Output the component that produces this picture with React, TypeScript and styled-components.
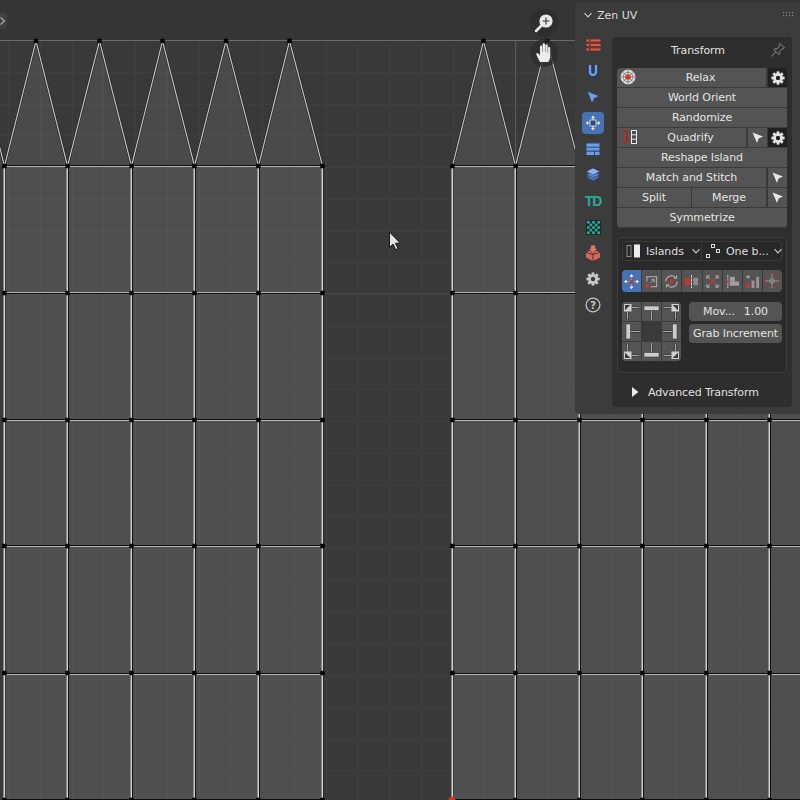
import React from "react";
import styled, { createGlobalStyle } from "styled-components";

const Global = createGlobalStyle`
  html, body { margin: 0; padding: 0; background: #393939; }
  #root { width: 800px; height: 800px; }
`;

const Stage = styled.div`
  position: relative;
  width: 800px;
  height: 800px;
  overflow: hidden;
  background: #393939;
  font-family: "DejaVu Sans", sans-serif;
  font-size: 11px;
  letter-spacing: -0.1px;
  color: #e2e2e2;
`;

const Canvas = styled.svg`
  position: absolute;
  left: 0;
  top: 0;
`;

const RoundTool = styled.div<{ $top: number }>`
  position: absolute;
  left: 530px;
  top: ${(p) => p.$top}px;
  width: 28px;
  height: 28px;
  border-radius: 50%;
  background: rgba(44, 44, 44, 0.75);
  display: flex;
  align-items: center;
  justify-content: center;
`;

const SideTab = styled.div`
  position: absolute;
  left: -8px;
  top: 13px;
  width: 15px;
  height: 16px;
  border-radius: 3px;
  background: #3f3f3f;
  display: flex;
  justify-content: flex-end;
  align-items: center;
  padding-right: 1px;
  box-sizing: border-box;
`;

const Panel = styled.aside`
  position: absolute;
  left: 575px;
  top: 3px;
  width: 225px;
  height: 411px;
  background: #3c3c3c;
  border-radius: 4px 0 0 4px;
  display: flex;
  flex-direction: column;
`;

const PanelHead = styled.header`
  height: 24px;
  display: flex;
  align-items: center;
  padding: 0 4px 0 8px;
  gap: 4px;
  color: #dcdcdc;
`;

const PanelTitle = styled.span`
  flex: 1;
  font-size: 11px;
  letter-spacing: 0;
`;

const PanelBody = styled.div`
  flex: 1;
  display: flex;
  padding: 10px 8px 7px 7px;
`;

const Tabs = styled.nav`
  width: 22px;
  margin: -3px 8px 0 0;
  display: flex;
  flex-direction: column;
  align-items: center;
  gap: 4px;
`;

const Tab = styled.div<{ $active?: boolean }>`
  width: 22px;
  height: 22px;
  border-radius: 4px;
  background: ${(p) => (p.$active ? "#4772b3" : "transparent")};
  display: flex;
  align-items: center;
  justify-content: center;
`;

const TdMark = styled.span`
  font-family: "Liberation Sans", sans-serif;
  font-weight: 700;
  font-size: 14px;
  letter-spacing: -1px;
  color: #2fa898;
`;

const SubPanel = styled.section`
  width: 180px;
  height: 370px;
  background: #2e2e2e;
  border-radius: 4px;
  box-sizing: border-box;
  padding: 0 5px 0 5px;
  display: flex;
  flex-direction: column;
`;

const SubHead = styled.div`
  height: 31px;
  box-sizing: border-box;
  padding: 0 8px 4px 0;
  display: flex;
  align-items: center;
  justify-content: center;
  position: relative;
  color: #e0e0e0;
`;

const PinSlot = styled.span`
  position: absolute;
  right: 1px;
  top: 5px;
  display: flex;
`;

const ButtonStack = styled.div`
  display: flex;
  flex-direction: column;
  width: 170px;
  height: 160px;
  border-radius: 4px;
  overflow: hidden;
`;

const ButtonRow = styled.div`
  display: flex;
  height: 20px;
`;

const OpButton = styled.button<{ $pad?: number }>`
  flex: 1 1 0;
  min-width: 0;
  height: 20px;
  margin: 0;
  padding: 0 0 0 ${(p) => p.$pad ?? 0}px;
  background: #545454;
  border: 0;
  border-right: 1px solid #3a3a3a;
  border-bottom: 1px solid #3a3a3a;
  color: #e4e4e4;
  font: 11px "DejaVu Sans", sans-serif;
  letter-spacing: -0.1px;
  position: relative;
  display: flex;
  align-items: center;
  justify-content: center;
  white-space: nowrap;
  &:last-child { border-right: 0; }
`;

const LeadIcon = styled.span`
  position: absolute;
  left: 3px;
  top: 1px;
  display: flex;
`;

const SquareButton = styled.button<{ $dark?: boolean }>`
  flex: 0 0 20px;
  width: 20px;
  height: 20px;
  margin: 0;
  padding: 0;
  background: ${(p) => (p.$dark ? "#212121" : "#545454")};
  border: 0;
  border-left: 1px solid #3a3a3a;
  border-bottom: 1px solid #3a3a3a;
  display: flex;
  align-items: center;
  justify-content: center;
  box-sizing: border-box;
`;

const OptionsBox = styled.div`
  margin-top: 9px;
  width: 170px;
  height: 136px;
  box-sizing: border-box;
  border: 1px solid #3d3d3d;
  border-radius: 4px;
  background: #2a2a2a;
  padding: 3px 0 0 4px;
  display: flex;
  flex-direction: column;
`;

const SelectRow = styled.div`
  display: flex;
  height: 20px;
  width: 160px;
  box-shadow: inset 0 0 0 1px #3a3a3a;
  border-radius: 4px;
  background: #282828;
`;

const SelectCell = styled.div`
  width: 80px;
  display: flex;
  align-items: center;
  padding-left: 4px;
  gap: 4px;
  box-sizing: border-box;
  color: #dedede;
  white-space: nowrap;
  &:first-child { border-right: 1px solid #3a3a3a; }
`;

const SelectLabel = styled.span`
  flex: 1;
`;

const IconRow = styled.div`
  margin-top: 9px;
  display: flex;
  width: 160px;
  height: 22px;
  border-radius: 4px;
  overflow: hidden;
`;

const ModeButton = styled.div<{ $active?: boolean }>`
  flex: 1;
  background: ${(p) => (p.$active ? "#4772b3" : "#545454")};
  border-right: 1px solid #3a3a3a;
  display: flex;
  align-items: center;
  justify-content: center;
  &:last-child { border-right: 0; }
`;

const PivotArea = styled.div`
  margin-top: 10px;
  display: flex;
  gap: 8px;
`;

const PivotGrid = styled.div`
  width: 59px;
  height: 59px;
  display: grid;
  grid-template-columns: repeat(3, 1fr);
  grid-template-rows: repeat(3, 1fr);
  gap: 1px;
  background: #3a3a3a;
  border-radius: 4px;
  overflow: hidden;
`;

const PivotCell = styled.div<{ $center?: boolean }>`
  background: ${(p) => (p.$center ? "#3a3a3a" : "#545454")};
  display: flex;
  align-items: center;
  justify-content: center;
`;

const FieldColumn = styled.div`
  width: 93px;
  display: flex;
  flex-direction: column;
  gap: 3px;
`;

const Field = styled.div`
  height: 19px;
  background: #545454;
  border-radius: 4px;
  color: #e2e2e2;
  display: flex;
  align-items: center;
  justify-content: center;
  gap: 9px;
  white-space: nowrap;
`;

const Advanced = styled.div`
  margin-top: 9px;
  height: 20px;
  display: flex;
  align-items: center;
  padding-left: 14px;
  gap: 9px;
  color: #e0e0e0;
`;

/* ---------- canvas ---------- */
const XS = [4, 67, 131, 194, 258, 322];
const XR = [452, 515, 579, 642, 706, 769];
const YS = [
  { y: 166, dark: 165, light: 166 },
  { y: 293, dark: 293, light: 292 },
  { y: 420, dark: 419, light: 420 },
  { y: 546, dark: 545, light: 546 },
  { y: 673, dark: 673, light: 674 },
  { y: 800, dark: 799, light: 800 },
];
const APEX_L = [-27.5, 36, 99.5, 162.5, 226, 289.5];
const APEX_R = [483.5, 547, 610];
const XL_ALL = [-59, ...XS];

function Mesh() {
  const grid: number[] = [];
  for (let i = 0; i < 26; i++) grid.push(8.5 + Math.round(i * 31.75));
  const gridY: number[] = [];
  for (let i = 1; i < 25; i++) gridY.push(40.5 + Math.round(i * 31.75));
  const triPts = (xs: number[], ap: number[]) =>
    ap.map((a, i) => `${xs[i] + 0.5},166 ${a},41 ${xs[i + 1] + 0.5},166`);
  const tris = [...triPts(XL_ALL, APEX_L), ...triPts(XR, APEX_R)];
  const verts: [number, number][] = [];
  [...XS, ...XR].forEach((x) => YS.forEach((r) => verts.push([x + 0.5, r.y])));
  [...APEX_L, ...APEX_R].forEach((x) => verts.push([x, 41]));
  return (
    <Canvas width={800} height={800} viewBox="0 0 800 800">
      <rect x={0} y={41} width={800} height={759} fill="#393939" />
      <rect x={0} y={0} width={800} height={41} fill="#353535" />
      {grid.map((x) => (
        <line key={x} x1={x} x2={x} y1={41} y2={800} stroke="#3f3f3f" strokeWidth={1} />
      ))}
      {gridY.map((y) => (
        <line key={y} x1={0} x2={800} y1={y} y2={y} stroke="#3f3f3f" strokeWidth={1} />
      ))}
      <line x1={0} x2={800} y1={40.5} y2={40.5} stroke="#6c6c6c" strokeWidth={1} />
      <line x1={515.5} x2={515.5} y1={41} y2={166} stroke="#575757" />
      <line x1={0} x2={800} y1={293.5} y2={293.5} stroke="#4a4a4a" />
      {tris.map((p) => (
        <polygon key={p} points={p} fill="#ffffff" fillOpacity={0.085} />
      ))}
      <rect x={4} y={166} width={318} height={634} fill="#4f4f4f" />
      <rect x={452} y={166} width={348} height={634} fill="#4f4f4f" />
      {grid.map((x) =>
        (x > 4 && x < 322) || x > 452 ? (
          <line key={x} x1={x} x2={x} y1={166} y2={800} stroke="#545454" strokeWidth={1} />
        ) : null
      )}
      {gridY.map((y) =>
        y > 166 ? (
          <React.Fragment key={y}>
            <line x1={4} x2={322} y1={y} y2={y} stroke="#545454" />
            <line x1={452} x2={800} y1={y} y2={y} stroke="#545454" />
          </React.Fragment>
        ) : null
      )}
      {tris.map((p) => (
        <polyline key={p} points={p} fill="none" stroke="#1d1d1d" strokeOpacity={0.65} strokeWidth={2.6} />
      ))}
      {tris.map((p) => (
        <polyline key={p} points={p} fill="none" stroke="#c8c8c8" strokeWidth={1.05} />
      ))}
      {[...XS, ...XR].map((x) => {
        const edge = x === 4 || x === 322 || x === 452;
        return (
          <React.Fragment key={x}>
            <line x1={x + 1.5} x2={x + 1.5} y1={166} y2={800} stroke="#0c0c0c" strokeOpacity={edge ? 0.25 : 0.9} />
            <line x1={x - 0.5} x2={x - 0.5} y1={166} y2={800} stroke="#8a8a8a" />
            <line x1={x + 0.5} x2={x + 0.5} y1={166} y2={800} stroke="#cecece" />
          </React.Fragment>
        );
      })}
      {YS.map((r) => (
        <React.Fragment key={r.y}>
          <line x1={4} x2={322} y1={r.light + 0.5} y2={r.light + 0.5} stroke="#b4b4b4" />
          <line x1={452} x2={800} y1={r.light + 0.5} y2={r.light + 0.5} stroke="#b4b4b4" />
          <line x1={4} x2={322} y1={r.dark + 0.5} y2={r.dark + 0.5} stroke="#0e0e0e" />
          <line x1={452} x2={800} y1={r.dark + 0.5} y2={r.dark + 0.5} stroke="#0e0e0e" />
        </React.Fragment>
      ))}
      {verts.map(([x, y]) => (
        <rect key={`${x}-${y}`} x={x - 2.25} y={y - 2.25} width={4.5} height={4.5} rx={1} fill="#000" />
      ))}
      <circle cx={452} cy={800} r={3.5} fill="#c8382e" />
      <path
        d="M389.5 232 v15.5 l3.6-3.4 2.6 5.6 2.4-1.1 -2.7-5.4 h5z"
        fill="#e4e4e4"
        stroke="#0a0a0a"
        strokeWidth={0.9}
      />
    </Canvas>
  );
}

/* ---------- icons ---------- */
const Svg = styled.svg`
  display: block;
  flex: none;
`;

const Chevron = () => (
  <Svg width={10} height={10} viewBox="0 0 10 10">
    <path d="M1.5 3.2 5 6.8 8.5 3.2" fill="none" stroke="#c8c8c8" strokeWidth={1.2} />
  </Svg>
);

const Gear = ({ c = "#e8e8e8", hole = "#212121" }: { c?: string; hole?: string }) => (
  <Svg width={14} height={14} viewBox="0 0 14 14">
    {[0, 45, 90, 135].map((a) => (
      <rect key={a} x={5.6} y={0.4} width={2.8} height={13.2} fill={c} transform={`rotate(${a} 7 7)`} />
    ))}
    <circle cx={7} cy={7} r={4.8} fill={c} />
    <circle cx={7} cy={7} r={2.2} fill={hole} />
  </Svg>
);

const Arrow = () => (
  <Svg width={13} height={13} viewBox="0 0 13 13">
    <path d="M1.5 1.5 12 5.6 7.6 7.4 6 12z" fill="#e6e6e6" />
  </Svg>
);

const Pin = () => (
  <Svg width={16} height={16} viewBox="0 0 16 16">
    <path
      d="M10 1.5 14.5 6l-1 .8-1.2-.3-2.8 2.8.2 2.4-.9.9-5-5 .9-.9 2.4.2L9.4 4.1 9.2 2.4zM5.6 9.8 1.5 14.5"
      fill="none"
      stroke="#8c8c8c"
      strokeWidth={1}
    />
  </Svg>
);

const RelaxIcon = () => (
  <Svg width={16} height={16} viewBox="0 0 16 16">
    <circle cx={8} cy={8} r={7} fill="#dedede" stroke="#f0f0f0" strokeWidth={0.8} />
    <path d="M8 1v14M1 8h14M3 3.4 13 12.6M13 3.4 3 12.6" stroke="#666" strokeWidth={0.7} />
    <circle cx={8} cy={8} r={4.8} fill="none" stroke="#666" strokeWidth={0.7} />
    <circle cx={8} cy={8} r={2.8} fill="#d5352b" />
  </Svg>
);

const QuadrifyIcon = () => (
  <Svg width={18} height={16} viewBox="0 0 18 16">
    <path d="M3 1.8C7.5 2 8.5 5 6 8 8.5 11 7.5 14 3 14.2" fill="none" stroke="#c8352c" strokeWidth={2.6} />
    <path d="M3 1.8C7.5 2 8.5 5 6 8 8.5 11 7.5 14 3 14.2" fill="none" stroke="#3a1f1c" strokeWidth={0.7} />
    <rect x={11.5} y={1.5} width={5} height={13} fill="#4d4d4d" stroke="#ececec" />
    <path d="M11.5 5.8h5M11.5 10.2h5" stroke="#ececec" strokeWidth={1} />
  </Svg>
);

const BLUE = "#6f9be0";

const tabIcons: React.ReactNode[] = [
  <Svg key="a" width={15} height={14} viewBox="0 0 15 14">
    <rect x={0.5} y={1} width={14} height={12} fill="#6e352f" />
    <path d="M0.5 2.5h2.5M4.5 2.5h10M0.5 7h2.5M4.5 7h10M0.5 11.5h2.5M4.5 11.5h10" stroke="#d2604f" strokeWidth={2} />
  </Svg>,
  <Svg key="b" width={14} height={14} viewBox="0 0 14 14">
    <path d="M4 1v7a3 3 0 0 0 6 0V1" fill="none" stroke="#1e2f55" strokeWidth={4.6} />
    <path d="M4 1v7a3 3 0 0 0 6 0V1" fill="none" stroke={BLUE} strokeWidth={2.6} />
  </Svg>,
  <Svg key="c" width={14} height={14} viewBox="0 0 14 14">
    <path d="M1 1 13.5 6 8.5 8.5 6 13.5z" fill={BLUE} stroke="#27365a" strokeWidth={0.8} />
  </Svg>,
  <Svg key="d" width={16} height={16} viewBox="0 0 16 16">
    <path d="M8 1.5v13M1.5 8h13" stroke="#e6e6e6" strokeWidth={1.2} />
    <path d="M8 .6 10 3H6zM8 15.4 10 13H6zM.6 8 3 6v4zM15.4 8 13 6v4z" fill="#e6e6e6" />
    <rect x={5} y={5} width={6} height={6} fill="#2f4a78" stroke="#e6e6e6" strokeWidth={0.8} />
  </Svg>,
  <Svg key="e" width={14} height={14} viewBox="0 0 14 14">
    <rect x={0.5} y={0.5} width={13} height={13} fill="#2f4a78" />
    <path d="M.5 1.5h13v3.2H.5zM.5 5.8h13V8.5H.5zM.5 9.7h7.5v3.2H.5zM9 9.7h4.5v3.2H9z" fill={BLUE} />
  </Svg>,
  <Svg key="f" width={16} height={16} viewBox="0 0 16 16">
    <path d="M8 7 15 10 8 14 1 10z" fill="#4f78bd" stroke="#26365a" strokeWidth={0.6} />
    <path d="M8 4.5 15 7.5 8 11 1 7.5z" fill="#5f8ad2" stroke="#26365a" strokeWidth={0.6} />
    <path d="M8 1 15 4.5 8 8 1 4.5z" fill="#8bb2ec" stroke="#26365a" strokeWidth={0.6} />
  </Svg>,
  <TdMark key="g">TD</TdMark>,
  <Svg key="h" width={15} height={15} viewBox="0 0 15 15">
    <rect x={0} y={0} width={15} height={15} fill="#17312e" />
    <rect x={1} y={1} width={13} height={13} fill="#2fa898" />
    {[0, 1, 2, 3, 4].flatMap((r) =>
      [0, 1, 2, 3, 4].map((q) =>
        (r + q) % 2 === 1 ? (
          <rect key={`${r}${q}`} x={1 + q * 2.6} y={1 + r * 2.6} width={2.6} height={2.6} fill="#1c2c2a" />
        ) : null
      )
    )}
  </Svg>,
  <Svg key="i" width={16} height={16} viewBox="0 0 16 16">
    <path d="M1 7.5 8 4l7 3.5v5L8 16l-7-3.5z" fill="#d9675a" />
    <path d="M8 16V9.5L1 7.5M8 9.5l7-2" stroke="#4a2a27" strokeWidth={0.9} fill="none" />
    <path d="M5.5 0h5v3.5h2.2L8 8.8 3.3 3.5h2.2z" fill="#e4746a" stroke="#3c3c3c" strokeWidth={0.8} />
  </Svg>,
  <Gear key="j" c="#c9c9c9" hole="#3c3c3c" />,
  <Svg key="k" width={16} height={16} viewBox="0 0 16 16">
    <circle cx={8} cy={8} r={6.9} fill="none" stroke="#c4c4c4" strokeWidth={1.3} />
    <text x={8} y={11.6} fontSize={10.5} fontWeight={700} textAnchor="middle" fill="#c4c4c4" fontFamily="DejaVu Sans">?</text>
  </Svg>,
];

const R = "#c8352c";
const W = "#cfcfcf";

const modeIcons: React.ReactNode[] = [
  <Svg key="1" width={15} height={15} viewBox="0 0 16 16">
    <path d="M8 2v12M2 8h12" stroke={W} strokeWidth={1} strokeDasharray="1.5 1.5" />
    <path d="M8 0 10 2.8H6zM8 16 10 13.2H6zM0 8 2.8 6v4zM16 8 13.2 6v4z" fill="#fff" />
    <rect x={6} y={6} width={4} height={4} fill={R} />
  </Svg>,
  <Svg key="2" width={15} height={15} viewBox="0 0 16 16">
    <path d="M3 8V3h10.5v10.5H7" fill="none" stroke="#b4b4b4" strokeWidth={1.1} />
    <path d="M7 9.5 10.5 6M8 6h3v3" fill="none" stroke="#b4b4b4" strokeWidth={1} />
    <rect x={1.5} y={10.5} width={4} height={4} fill={R} />
  </Svg>,
  <Svg key="3" width={15} height={15} viewBox="0 0 16 16">
    <path d="M2 8a6 6 0 0 1 10.5-4M14 8a6 6 0 0 1-10.5 4" fill="none" stroke="#bdbdbd" strokeWidth={1.1} />
    <path d="M13.5 1.5v3h-3M2.5 14.5v-3h3" fill="none" stroke="#bdbdbd" strokeWidth={1} />
    <rect x={6} y={6} width={4} height={4} fill={R} />
  </Svg>,
  <Svg key="4" width={15} height={15} viewBox="0 0 16 16">
    <rect x={1} y={4} width={5} height={8} fill={R} />
    <rect x={10} y={4} width={5} height={8} fill="#8e8e8e" />
    <path d="M8 1v14" stroke="#e0e0e0" strokeWidth={1} strokeDasharray="3 1" />
  </Svg>,
  <Svg key="5" width={15} height={15} viewBox="0 0 16 16">
    <path d="M2 2h3M2 2v3M14 2h-3M14 2v3M2 14h3M2 14v-3M14 14h-3M14 14v-3M3 3l2 2M13 3l-2 2M3 13l2-2M13 13l-2-2" stroke="#c4c4c4" strokeWidth={1} fill="none" />
    <rect x={6} y={6} width={4} height={4} fill={R} />
  </Svg>,
  <Svg key="6" width={15} height={15} viewBox="0 0 16 16">
    <path d="M3 1v14" stroke="#d8d8d8" strokeWidth={1} strokeDasharray="2 1" />
    <rect x={5} y={3} width={5.5} height={5} fill="#a0a0a0" />
    <rect x={5} y={8} width={10} height={4.5} fill="#a0a0a0" />
    <rect x={0.5} y={7} width={2.5} height={2.5} fill={R} />
  </Svg>,
  <Svg key="7" width={15} height={15} viewBox="0 0 16 16">
    <path d="M1 3h3M3 1.5 5 3 3 4.5" stroke="#d0d0d0" fill="none" strokeWidth={0.9} />
    <rect x={1.5} y={10} width={3.5} height={5} fill={R} />
    <rect x={7} y={7} width={3} height={8} fill="#969696" />
    <rect x={12} y={3} width={3} height={12} fill="#969696" />
  </Svg>,
  <Svg key="8" width={16} height={16} viewBox="0 0 16 16">
    <circle cx={8} cy={8} r={6.8} fill="none" stroke={R} strokeWidth={1} strokeDasharray="2.2 1.4" />
    <path d="M8 1v14M1 8h14" stroke="#a8a8a8" strokeWidth={0.7} />
    <circle cx={8} cy={8} r={2.4} fill="none" stroke="#a8a8a8" strokeWidth={0.7} />
  </Svg>,
];

const PivotIcon = ({ rot, block }: { rot: number; block: "corner" | "edge" }) => (
  <Svg width={19} height={19} viewBox="0 0 19 19">
    <g transform={`rotate(${rot} 9.5 9.5)`}>
      {block === "corner" ? (
        <>
          <path d="M10 5.5h7M5.5 10v7" stroke="#3a3a3a" strokeWidth={2.6} />
          <path d="M10 5.5h7M5.5 10v7" stroke="#a6a6a6" strokeWidth={1.1} />
          <rect x={2} y={2} width={7.5} height={7.5} fill="#cfcfcf" />
          <path d="M3 8.3V3h5.3z" fill="#3a3a3a" />
        </>
      ) : (
        <>
          <path d="M9.5 8v10" stroke="#3a3a3a" strokeWidth={2.8} />
          <path d="M9.5 8v10" stroke="#a6a6a6" strokeWidth={1.2} />
          <rect x={2} y={4} width={15} height={4.4} fill="#cccccc" stroke="#3f3f3f" strokeWidth={0.6} />
        </>
      )}
    </g>
  </Svg>
);

const pivots: { rot: number; block: "corner" | "edge" }[] = [
  { rot: 0, block: "corner" },
  { rot: 0, block: "edge" },
  { rot: 90, block: "corner" },
  { rot: 270, block: "edge" },
  { rot: 0, block: "edge" },
  { rot: 90, block: "edge" },
  { rot: 270, block: "corner" },
  { rot: 180, block: "edge" },
  { rot: 180, block: "corner" },
];

const plainOps = ["World Orient", "Randomize"];

export default function App() {
  return (
    <Stage>
      <Global />
      <Mesh />
      <SideTab>
        <Svg width={7} height={10} viewBox="0 0 7 10">
          <path d="M1.5 1.5 5.5 5 1.5 8.5" fill="none" stroke="#b0b0b0" strokeWidth={1.1} />
        </Svg>
      </SideTab>
      <RoundTool $top={9}>
        <Svg width={20} height={20} viewBox="0 0 20 20">
          <circle cx={12} cy={8} r={6.6} fill="#e8e8e8" />
          <path d="M7 13 2 18" stroke="#e8e8e8" strokeWidth={2.6} strokeLinecap="round" />
          <path d="M12 4.6v6.8M8.6 8h6.8" stroke="#333" strokeWidth={1.1} />
        </Svg>
      </RoundTool>
      <RoundTool $top={39}>
        <Svg width={18} height={22} viewBox="0 0 18 22">
          <path
            d="M5 20 1.5 13c-.8-1.6 1-2.6 2-1.3L5 13.5V4.5c0-1.5 2-1.5 2.2 0V10h.4V2.5c0-1.6 2.3-1.6 2.4 0V10h.4V3.5c0-1.5 2.2-1.5 2.3 0V11h.4V6c0-1.4 2.1-1.4 2.1 0v8c0 3-1 4.5-2 6z"
            fill="#ececec"
          />
        </Svg>
      </RoundTool>

      <Panel>
        <PanelHead>
          <Chevron />
          <PanelTitle>Zen UV</PanelTitle>
          <Svg width={14} height={8} viewBox="0 0 14 8">
            {[0, 1].flatMap((r) =>
              [0, 1, 2, 3].map((q) => (
                <rect key={`${r}${q}`} x={1 + q * 3} y={1 + r * 3} width={1.2} height={1.2} fill="#8a8a8a" />
              ))
            )}
          </Svg>
        </PanelHead>
        <PanelBody>
          <Tabs>
            {tabIcons.map((icon, i) => (
              <Tab key={i} $active={i === 3}>
                {icon}
              </Tab>
            ))}
          </Tabs>
          <SubPanel>
            <SubHead>
              Transform
              <PinSlot>
                <Pin />
              </PinSlot>
            </SubHead>
            <ButtonStack>
              <ButtonRow>
                <OpButton $pad={18}>
                  <LeadIcon>
                    <RelaxIcon />
                  </LeadIcon>
                  Relax
                </OpButton>
                <SquareButton $dark>
                  <Gear />
                </SquareButton>
              </ButtonRow>
              {plainOps.map((t) => (
                <ButtonRow key={t}>
                  <OpButton>{t}</OpButton>
                </ButtonRow>
              ))}
              <ButtonRow>
                <OpButton $pad={18}>
                  <LeadIcon>
                    <QuadrifyIcon />
                  </LeadIcon>
                  Quadrify
                </OpButton>
                <SquareButton>
                  <Arrow />
                </SquareButton>
                <SquareButton $dark>
                  <Gear />
                </SquareButton>
              </ButtonRow>
              <ButtonRow>
                <OpButton>Reshape Island</OpButton>
              </ButtonRow>
              <ButtonRow>
                <OpButton>Match and Stitch</OpButton>
                <SquareButton>
                  <Arrow />
                </SquareButton>
              </ButtonRow>
              <ButtonRow>
                <OpButton>Split</OpButton>
                <OpButton>Merge</OpButton>
                <SquareButton>
                  <Arrow />
                </SquareButton>
              </ButtonRow>
              <ButtonRow>
                <OpButton>Symmetrize</OpButton>
              </ButtonRow>
            </ButtonStack>
            <OptionsBox>
              <SelectRow>
                <SelectCell>
                  <Svg width={16} height={14} viewBox="0 0 16 14">
                    <rect x={1} y={1.5} width={4} height={11} fill="none" stroke="#8a8a8a" />
                    <rect x={8} y={0.5} width={6} height={13} fill="#ececec" />
                  </Svg>
                  <SelectLabel>Islands</SelectLabel>
                  <Chevron />
                </SelectCell>
                <SelectCell>
                  <Svg width={16} height={14} viewBox="0 0 16 14">
                    <rect x={5.5} y={0.5} width={3} height={3} fill="none" stroke="#ddd" />
                    <rect x={10.5} y={5.5} width={3} height={3} fill="none" stroke="#ddd" />
                    <rect x={0.5} y={10.5} width={3} height={3} fill="none" stroke="#ddd" />
                  </Svg>
                  <SelectLabel>One b...</SelectLabel>
                  <Chevron />
                </SelectCell>
              </SelectRow>
              <IconRow>
                {modeIcons.map((icon, i) => (
                  <ModeButton key={i} $active={i === 0}>
                    {icon}
                  </ModeButton>
                ))}
              </IconRow>
              <PivotArea>
                <PivotGrid>
                  {pivots.map((p, i) => (
                    <PivotCell key={i} $center={i === 4}>
                      {i !== 4 && <PivotIcon rot={p.rot} block={p.block} />}
                    </PivotCell>
                  ))}
                </PivotGrid>
                <FieldColumn>
                  <Field>
                    <span>Mov...</span>
                    <span>1.00</span>
                  </Field>
                  <Field>Grab Increment</Field>
                </FieldColumn>
              </PivotArea>
            </OptionsBox>
            <Advanced>
              <Svg width={8} height={10} viewBox="0 0 8 10">
                <path d="M1 0 7.5 5 1 10z" fill="#e6e6e6" />
              </Svg>
              Advanced Transform
            </Advanced>
          </SubPanel>
        </PanelBody>
      </Panel>
    </Stage>
  );
}
